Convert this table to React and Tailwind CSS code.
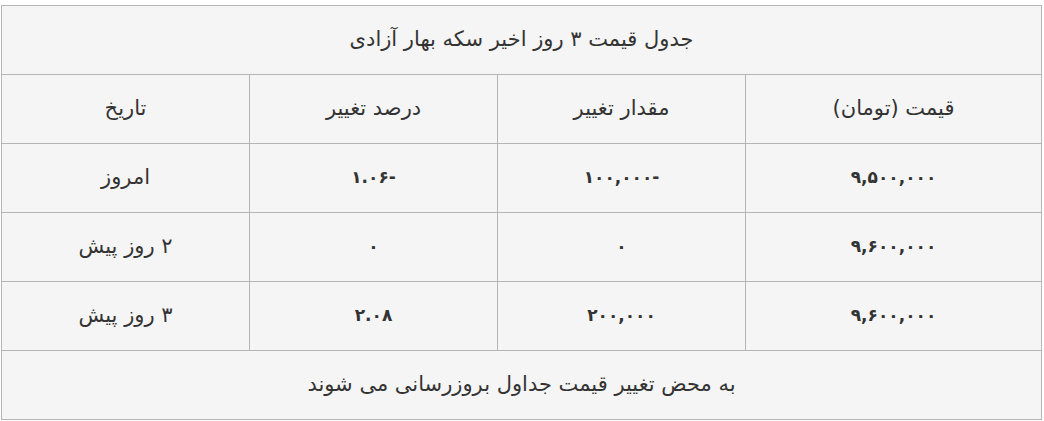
export default function App() {
  const rows = [
    ["۹,۵۰۰,۰۰۰", "۱۰۰,۰۰۰-", "۱.۰۶-", "امروز"],
    ["۹,۶۰۰,۰۰۰", "۰", "۰", "۲ روز پیش"],
    ["۹,۶۰۰,۰۰۰", "۲۰۰,۰۰۰", "۲.۰۸", "۳ روز پیش"],
  ];
  const cell = "border border-[#b5b5b5] h-[69px] text-center align-middle p-0";
  return (
    <div className="w-[1044px] h-[421px] bg-white pt-[5px] pl-[1px]" style={{ fontFamily: '"DejaVu Sans", sans-serif' }}>
      <table dir="rtl" className="border-collapse bg-[#f5f5f5] text-[#333] text-[21px] w-[1040px] table-fixed">
        <colgroup>
          <col className="w-[296px]" />
          <col className="w-[248px]" />
          <col className="w-[248px]" />
          <col className="w-[248px]" />
        </colgroup>
        <tbody>
          <tr>
            <td colSpan={4} className={cell}>جدول قیمت ۳ روز اخیر سکه بهار آزادی</td>
          </tr>
          <tr>
            <td className={cell}>قیمت (تومان)</td>
            <td className={cell}>مقدار تغییر</td>
            <td className={cell}>درصد تغییر</td>
            <td className={cell}>تاریخ</td>
          </tr>
          {rows.map((r, i) => (
            <tr key={i}>
              {r.map((c, j) => (
                <td key={j} className={cell + (j < 3 ? " text-[17px] font-semibold" : "")}>
                  {j < 3 ? <span dir="ltr" className="inline-block">{c}</span> : c}
                </td>
              ))}
            </tr>
          ))}
          <tr>
            <td colSpan={4} className={cell}>به محض تغییر قیمت جداول بروزرسانی می شوند</td>
          </tr>
        </tbody>
      </table>
    </div>
  );
}
